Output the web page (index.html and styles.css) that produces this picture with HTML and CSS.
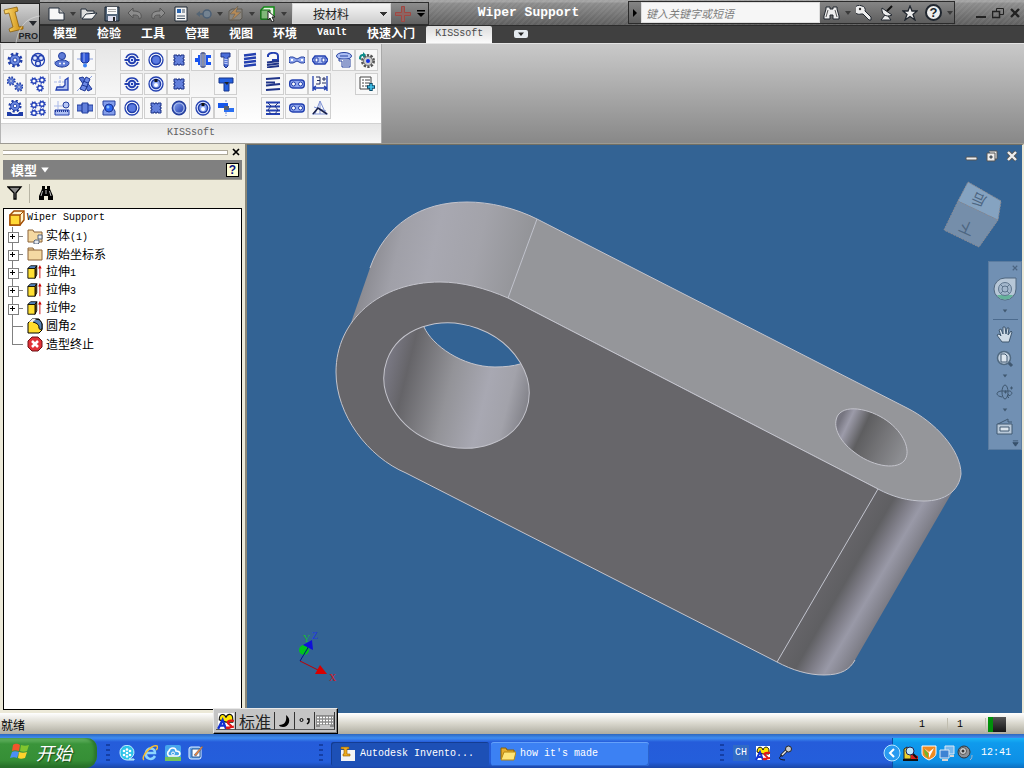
FILE: index.html
```html
<!DOCTYPE html>
<html lang="zh-CN">
<head>
<meta charset="utf-8">
<title>Wiper Support</title>
<link rel="stylesheet" href="styles.css">
</head>
<body>
<svg class="defs" aria-hidden="true">
  <defs>
    <linearGradient id="blue" x1="0" y1="0" x2="1" y2="1"><stop offset="0" stop-color="#7f9bea"/><stop offset="1" stop-color="#2340b0"/></linearGradient>
    <linearGradient id="gold" x1="0" y1="0" x2="1" y2="0"><stop offset="0" stop-color="#ffe07a"/><stop offset="1" stop-color="#c98606"/></linearGradient>
  </defs>
  <symbol id="cog" viewBox="0 0 16 16"><circle cx="8" cy="8" r="6" fill="none" stroke="#1f3da8" stroke-width="3" stroke-dasharray="2.4 2.31"/><circle cx="8" cy="8" r="5" fill="#6d8be0" stroke="#1f3da8"/><circle cx="8" cy="8" r="2" fill="#fff" stroke="#1f3da8"/></symbol>
  <symbol id="cogline" viewBox="0 0 16 16"><circle cx="8" cy="8" r="6" fill="none" stroke="#2340b8" stroke-width="3.4" stroke-dasharray="2.4 2.31"/><circle cx="8" cy="8" r="4.5" fill="#fff" stroke="#2340b8" stroke-width="2.6"/></symbol>
  <symbol id="bearing" viewBox="0 0 16 16"><path d="M2 6a6.500 6.500 0 0 1 12 0M2 10a6.500 6.500 0 0 0 12 0" fill="none" stroke="#2340b0" stroke-width="1.6"/><circle cx="8" cy="8" r="3.3" fill="#dbe4ff" stroke="#2340b0" stroke-width="2"/><path d="M0.500 8h4M11.500 8h4M7 8h2" stroke="#2340b0" stroke-width="2"/></symbol>
  <symbol id="ring" viewBox="0 0 16 16"><circle cx="8" cy="8" r="7" fill="#fff" stroke="#2340b0" stroke-width="1.3"/><circle cx="8" cy="8" r="4.5" fill="#5a7ae0" stroke="#1f3da8" stroke-width="1.5"/></symbol>
  <symbol id="keyring" viewBox="0 0 16 16"><circle cx="8" cy="8" r="7" fill="#dfe6ff" stroke="#2340b0" stroke-width="1.3"/><circle cx="8" cy="8" r="4.5" fill="#8ba5f2" stroke="#1f3da8" stroke-width="1.5"/><circle cx="8" cy="9" r="2" fill="#fff"/><path d="M6.500 3h3v3h-3z" fill="#111"/></symbol>
  <symbol id="sphere" viewBox="0 0 16 16"><circle cx="8" cy="8" r="6.600" fill="#a9bced" stroke="#25409e" stroke-width="1.6"/><circle cx="8" cy="8" r="4.500" fill="url(#blue)"/></symbol>
  <symbol id="spline" viewBox="0 0 16 16"><path d="M3 3h3v1h1V3h2v1h1V3h3v3h-1v1h1v2h-1v1h1v3h-3v-1H9v1H7v-1H6v1H3v-3h1V9H3V7h1V6H3z" fill="#6380db" stroke="#1f3488"/></symbol>
  <symbol id="chain" viewBox="0 0 16 16"><path d="M3 4h10l3 4-3 4H3L0 8z" fill="#a9bcf5" stroke="#2340b0" stroke-width="1.4"/><path d="M3 6h3v4H3zM10 6h3v4h-3z" fill="#fff" stroke="#2340b0"/></symbol>
  <symbol id="links" viewBox="0 0 16 16"><rect x="0.700" y="4" width="14.600" height="8" rx="3" fill="#8fa6ee" stroke="#2340b0" stroke-width="1.4"/><circle cx="4.500" cy="8" r="2" fill="#fff" stroke="#1f3da8"/><circle cx="11.500" cy="8" r="2" fill="#fff" stroke="#1f3da8"/></symbol>
  <symbol id="coil" viewBox="0 0 16 16"><path d="M2 3.500 14 2M2 7l12-1.500M2 10.500 14 9M2 14l12-1.500" stroke="#2340b0" stroke-width="2.400"/></symbol>
  <symbol id="down" viewBox="0 0 8 8"><path d="M1 2h6L4 6z" fill="currentColor"/></symbol>
  <symbol id="extrude" viewBox="0 0 18 16"><path d="M1 4l3-3h7L9 4z" fill="#5d93d3" stroke="#000"/><path d="M9 4l2-3v10l-2 4z" fill="#a77b00" stroke="#000"/><path d="M1 4h8v11H1z" fill="#ffe033" stroke="#000"/><path d="M14.500 15V3" stroke="#c00"/><path d="M12.500 4 14.500 0l2 4z" fill="#c00"/></symbol>
  <symbol id="binoc" viewBox="0 0 18 16"><path d="M5 1h3v3h2V1h3v3l3 7v4h-5v-4H7v4H2v-4l3-7z" fill="currentColor"/><path d="M5.500 6 4 11M12.500 6l1.500 5M9 5v4" stroke="#bbb"/></symbol>
  <symbol id="ime" viewBox="0 0 16 16"><path d="M1 1h14v14H1z" fill="#fff"/><path d="M2 7c0-6 5-6 6-2 1-4 6-4 6 1v3H8z" fill="#ffe600" stroke="#111"/><path d="M1 15 5 7l3 8M3 12h4" fill="none" stroke="#1230d0" stroke-width="2"/><path d="M15 8c-5-1-7 1-4 3s1 4-3 3l7-1" fill="none" stroke="#e01818" stroke-width="2"/></symbol>
</svg>

<header class="top">
  <button class="app" aria-label="Inventor Pro">
    <svg viewBox="0 0 39 39" width="39" height="39"><path d="M3 6l13-3 1 4-3 1 4 15 4-1 0 3-13 3-1-3 4-2L8 9 4 10z" fill="url(#gold)" stroke="#825500" stroke-width="0.700"/><path d="M28 17h8l-4 5z" fill="#24272c"/><path d="M15 39C18 21 26 14 39 12" fill="none" stroke="#eee" opacity="0.500"/></svg>
    <span>PRO</span>
  </button>
  <div class="top-rows">
    <div class="titlebar">
      <div class="qat">
        <button class="q" aria-label="新建"><svg viewBox="0 0 18 16" width="18" height="16"><path d="M1 2h10l5 5v7H1z" fill="#f7f7f7" stroke="#222d3a"/><path d="M11 2v5h5" fill="#bbb" stroke="#222d3a"/></svg></button>
        <button class="dd" aria-label="新建选项"><svg width="8" height="8"><use href="#down"/></svg></button>
        <button class="q" aria-label="打开"><svg viewBox="0 0 18 16" width="18" height="16"><path d="M1 12V3h5l1 2h7v3" fill="#ddd" stroke="#222d3a"/><path d="M2 13 6 8l11-1-5 6z" fill="#f3f3f3" stroke="#222d3a"/></svg></button>
        <button class="q" aria-label="保存"><svg viewBox="0 0 16 16" width="16" height="16"><path d="M1 1h14v14H1z" fill="#57697d" stroke="#16202c"/><path d="M3 1h10v7H3z" fill="#fafafa"/><path d="M4 10h8v5H4z" fill="#dde"/><path d="M9 11h2v4H9z" fill="#222"/><path d="M4 3.500h8M4 5.500h8" stroke="#aaa"/></svg></button>
        <button class="q" aria-label="撤消"><svg viewBox="0 0 16 14" width="16" height="14"><path d="M1 6l5-5v3c6 0 9 2 8 7l-2 1c0-4-2-4-6-4v3z" fill="#8c8c8c" stroke="#555"/></svg></button>
        <button class="q" aria-label="重做"><svg viewBox="0 0 16 14" width="16" height="14"><path d="M15 6l-5-5v3C4 4 1 6 2 11l2 1c0-4 2-4 6-4v3z" fill="#8c8c8c" stroke="#555"/></svg></button>
        <button class="q" aria-label="特性"><svg viewBox="0 0 14 16" width="14" height="16"><path d="M1 1h12v14H1z" fill="#f3f3f3" stroke="#1d2733"/><path d="M3 3h4v4H3z" fill="#2a65b0"/><path d="M8 4h3M8 6h3M3 10h8M3 12.500h8" stroke="#456"/></svg></button>
        <button class="q" aria-label="返回"><svg viewBox="0 0 18 14" width="18" height="14"><path d="M1 7l4-3v2h4v2H5v2z" fill="#556574"/><circle cx="12" cy="7" r="4" fill="#748391" stroke="#4c5f74" stroke-width="1.500"/></svg></button>
        <button class="dd" aria-label="返回选项"><svg width="8" height="8"><use href="#down"/></svg></button>
        <button class="q" aria-label="更新"><svg viewBox="0 0 18 16" width="18" height="16"><path d="M2 5l3-2h10v9l-2 2H2z" fill="#8a8680" stroke="#5d5851"/><path d="M11 0 3 8l5 0-4 7 10-9-5 0z" fill="#b58a58" stroke="#5d5851" stroke-width="0.500"/></svg></button>
        <button class="dd" aria-label="更新选项"><svg width="8" height="8"><use href="#down"/></svg></button>
        <button class="q" aria-label="选择"><svg viewBox="0 0 16 16" width="16" height="16"><path d="M1 4l3-3h10v9l-3 3H1z" fill="#e6f5e0" stroke="#118a15" stroke-width="1.500"/><path d="M1 4h9v9H1z" fill="#7fb878" stroke="#0b650e"/><path d="M8 5v9l2-2 2 4 2-1-2-4h3z" fill="#fff" stroke="#222"/></svg></button>
        <button class="dd" aria-label="选择选项"><svg width="8" height="8"><use href="#down"/></svg></button>
        <select class="material" aria-label="颜色"><option>按材料</option></select>
        <button class="q" aria-label="添加"><svg viewBox="0 0 16 16" width="16" height="16"><path d="M6.500 0.500h3v6h6v3h-6v6h-3v-6h-6v-3h6z" fill="#8d6562" stroke="#a14742"/></svg></button>
        <button class="dd dark" aria-label="自定义"><svg viewBox="0 0 10 10" width="10" height="10"><path d="M1 1h8v1.500H1zM1 4h8L5 8z" fill="currentColor"/></svg></button>
      </div>
      <h1 class="title">Wiper Support</h1>
      <form class="search">
        <button type="button" class="go" aria-label="展开"><svg viewBox="0 0 6 8" width="6" height="8"><path d="M1 0l4 4-4 4z"/></svg></button>
        <input type="text" aria-label="搜索" placeholder="键入关键字或短语">
        <button type="button" class="s" aria-label="搜索"><svg viewBox="0 0 18 16" width="18" height="16"><path d="M3 2h4v2h3V2h4v2l2 7v3h-6v-4H7v4H1v-3l2-7z" fill="#eee" stroke="#20262e"/><path d="M5 5 3 12M12 5l2 7" stroke="#555"/></svg></button>
        <button type="button" class="dd" aria-label="搜索选项"><svg width="8" height="8"><use href="#down"/></svg></button>
        <button type="button" class="s" aria-label="速博"><svg viewBox="0 0 16 16" width="16" height="16"><path d="M6 1a5 4.500 0 1 0-1 8l2 0 6 6h2v-3L9 6c1-2-1-5-3-5z" fill="#eee" stroke="#20262e"/><circle cx="4" cy="4" r="1.200" fill="#333"/></svg></button>
        <button type="button" class="s" aria-label="通讯中心"><svg viewBox="0 0 16 16" width="16" height="16"><path d="M6 10l-4 5h10L9 11" fill="#eee" stroke="#20262e"/><path d="M3 3c-1 6 4 10 10 7z" fill="#eee" stroke="#20262e"/><path d="M8 6l5-5" stroke="#111" stroke-width="2"/></svg></button>
        <button type="button" class="s" aria-label="收藏夹"><svg viewBox="0 0 16 16" width="16" height="16"><path d="M8 1l2 5h5l-4 3.500 2 5.500-5-3.500L3 15l2-5.500L1 6h5z" fill="#eee" stroke="#20262e" stroke-width="1.300"/></svg></button>
        <button type="button" class="s help" aria-label="帮助">?</button>
        <button type="button" class="dd" aria-label="帮助选项"><svg width="8" height="8"><use href="#down"/></svg></button>
      </form>
      <div class="wincontrols">
        <button aria-label="最小化"><svg viewBox="0 0 12 12" width="12" height="12"><path d="M1 9h10v2H1z" fill="#222"/></svg></button>
        <button aria-label="还原"><svg viewBox="0 0 12 12" width="12" height="12" fill="none" stroke="#222"><path d="M4.500 4V1.500h7v6H8"/><path d="M0.500 4.500h7v6h-7z" stroke-width="1.500"/></svg></button>
        <button aria-label="关闭"><svg viewBox="0 0 12 12" width="12" height="12"><path d="M2 2l8 8M10 2l-8 8" stroke="#222" stroke-width="2.400"/></svg></button>
      </div>
    </div>
    <nav class="tabs">
      <button>模型</button><button>检验</button><button>工具</button><button>管理</button><button>视图</button><button>环境</button><button class="lat">Vault</button><button>快速入门</button><button class="lat active">KISSsoft</button>
      <button class="collapse" aria-label="最小化功能区"><svg viewBox="0 0 14 8" width="14" height="8"><rect width="14" height="8" rx="2" fill="#e5eaef"/><path d="M4 2.500h6L7 6z" fill="#222"/></svg></button>
    </nav>
  </div>
</header>

<section class="ribbon">
  <div class="panel">
    <div class="tools">
      <button class="r1 c1" aria-label="齿轮"><svg><use href="#cog"/></svg></button>
      <button class="r1 c2" aria-label="行星齿轮"><svg viewBox="0 0 16 16"><circle cx="8" cy="8" r="6.500" fill="#fff" stroke="#2340b0" stroke-width="1.300"/><circle cx="5" cy="6" r="2.500" fill="#dfe7ff" stroke="#2340b0" stroke-width="1.300"/><circle cx="11" cy="6" r="2.500" fill="#dfe7ff" stroke="#2340b0" stroke-width="1.300"/><circle cx="8" cy="11.500" r="2.500" fill="#dfe7ff" stroke="#2340b0" stroke-width="1.300"/></svg></button>
      <button class="r1 c3" aria-label="蜗轮"><svg viewBox="0 0 16 16"><path d="M8 0v16M0 10h16" stroke="#8da2e0"/><circle cx="8" cy="4" r="3.500" fill="#5e7bd6" stroke="#25409e"/><ellipse cx="8" cy="11.500" rx="7" ry="3.500" fill="#5e7bd6" stroke="#25409e"/><circle cx="6" cy="11.500" r="1" fill="#fff"/><circle cx="10" cy="11.500" r="1" fill="#fff"/></svg></button>
      <button class="r1 c4" aria-label="锥齿轮"><svg viewBox="0 0 16 16"><path d="M0 7h16" stroke="#8da2e0"/><path d="M4 1h8v8l-2 2H6L4 9z" fill="#3157d6" stroke="#1d3694"/><path d="M7 1v9" stroke="#9ab0f5"/><circle cx="8" cy="13.500" r="2" fill="#3b83f5"/></svg></button>
      <button class="r1 c6" aria-label="轴承"><svg><use href="#bearing"/></svg></button>
      <button class="r1 c7" aria-label="滑动轴承"><svg><use href="#ring"/></svg></button>
      <button class="r1 c8" aria-label="花键"><svg><use href="#spline"/></svg></button>
      <button class="r1 c9" aria-label="轴"><svg viewBox="0 0 16 16"><path d="M0 6h3V3h2v10H3v-3H0z" fill="#1753ef"/><path d="M11 3h5v3h-3v4h3v3h-5z" fill="#1753ef"/><path d="M6 1h4v14H6z" fill="#cddafa" stroke="#253d88"/><path d="M8 0v16" stroke="#445"/></svg></button>
      <button class="r1 c10" aria-label="螺栓"><svg viewBox="0 0 16 16"><path d="M3 1h9v4h-2v9l-2 2-2-2V5H3z" fill="#4b6ed9" stroke="#1f3488"/><path d="M6 7l4 1M6 9l4 1M6 11l4 1" stroke="#cdd8ff"/></svg></button>
      <button class="r1 c11" aria-label="压簧"><svg><use href="#coil"/></svg></button>
      <button class="r1 c12" aria-label="拉簧"><svg viewBox="0 0 16 16"><path d="M3 5V3c2-3 10-3 10 1v4H7" fill="none" stroke="#2340b0" stroke-width="2"/><path d="M2 10.500 14 9M2 13 14 11.500M2 15.500 14 14" stroke="#1f3488" stroke-width="1.800"/></svg></button>
      <button class="r1 c13" aria-label="链条"><svg viewBox="0 0 16 16"><path d="M0 6l1-1h3l4 2 4-2h3l1 1v4l-1 1h-3L8 9l-4 2H1l-1-1z" fill="#8fa6ee" stroke="#25409e"/><path d="M2 8h2M12 8h2" stroke="#fff" stroke-width="2"/></svg></button>
      <button class="r1 c14" aria-label="链轮"><svg><use href="#chain"/></svg></button>
      <button class="r1 c15" aria-label="带轮"><svg viewBox="0 0 16 16"><ellipse cx="8" cy="4" rx="7.500" ry="3.500" fill="#aec0f5" stroke="#25409e"/><path d="M3 7h11v8H6V9H3z" fill="#fff" stroke="#25409e"/><path d="M8 8v6M10 8v6M12 8v6M4 4h8" stroke="#25409e"/></svg></button>
      <button class="r1 c16" aria-label="更新齿轮"><svg viewBox="0 0 16 16"><circle cx="9" cy="9" r="5.500" fill="none" stroke="#555" stroke-width="3" stroke-dasharray="2.200 1.250"/><circle cx="9" cy="9" r="4.500" fill="#ccc" stroke="#777"/><circle cx="9" cy="9" r="2" fill="#1232e6"/><path d="M0 7c0-4 2-5 4-5V0l3 3-3 3V4C2 4 2 6 2 8z" fill="#0d8a87"/></svg></button>

      <button class="r2 c1" aria-label="齿轮副"><svg viewBox="0 0 16 16"><use href="#cog" x="-1" y="0" width="10" height="10"/><use href="#cog" x="7" y="6" width="10" height="10"/></svg></button>
      <button class="r2 c2" aria-label="三齿轮"><svg viewBox="0 0 16 16"><use href="#cogline" x="0" y="1" width="8" height="8"/><use href="#cogline" x="8" y="0" width="8" height="8"/><use href="#cogline" x="6" y="8" width="8" height="8"/></svg></button>
      <button class="r2 c3" aria-label="锥齿轮副"><svg viewBox="0 0 16 16"><path d="M6 0v12M0 6h12" stroke="#a9b8e8" stroke-dasharray="3 1"/><path d="M14 2v12H2l1-3h6l2-2V4z" fill="#aebff2" stroke="#2340b0" stroke-width="1.300"/></svg></button>
      <button class="r2 c4" aria-label="交错轴齿轮"><svg viewBox="0 0 16 16"><path d="M0 15 15 0" stroke="#8da2e0"/><path d="M2 2l4-1 9 12-4 2z" fill="#5876d8" stroke="#1d3694"/><path d="M9 1l4 2-5 12-5-2z" fill="#6e8be5" stroke="#1d3694"/><path d="M6 5l5 2M5 9l6 2" stroke="#1d3694"/></svg></button>
      <button class="r2 c6" aria-label="滚动轴承"><svg><use href="#bearing"/></svg></button>
      <button class="r2 c7" aria-label="键"><svg><use href="#keyring"/></svg></button>
      <button class="r2 c8" aria-label="花键轴"><svg><use href="#spline"/></svg></button>
      <button class="r2 c10" aria-label="销"><svg viewBox="0 0 16 16"><path d="M1 2h14v5h-4v8H6V7H1z" fill="#2460df" stroke="#17358a"/><path d="M6 6h5l-2 3z" fill="#222"/></svg></button>
      <button class="r2 c12" aria-label="碟簧"><svg viewBox="0 0 16 16"><path d="M1 3l14-1M1 6.500h9M1 9.500 15 8M1 14l14-1" stroke="#1f3488" stroke-width="2.200"/></svg></button>
      <button class="r2 c13" aria-label="套筒链"><svg><use href="#links"/></svg></button>
      <button class="r2 c14" aria-label="尺寸链"><svg viewBox="0 0 16 16"><path d="M1 0v15M15 0v15M1 12h14M4 10l-3 2 3 2M12 10l3 2-3 2" fill="none" stroke="#2340b0" stroke-width="1.300"/><path d="M4 1h4v7H4M5 4.500h3M10 3h4M12 1v4M10 7h4" fill="none" stroke="#222d60"/></svg></button>
      <button class="r2 c16" aria-label="添加列表"><svg viewBox="0 0 16 16"><path d="M1 1h11v12H1z" fill="#fff" stroke="#444"/><path d="M3 4h2M6 4h5M3 7h2M6 7h5M3 10h2M6 10h3" stroke="#444"/><path d="M12 7v8M8 11h8" stroke="#084a68" stroke-width="3.400"/><path d="M12 8v6M9 11h6" stroke="#42c4ee" stroke-width="1.600"/></svg></button>

      <button class="r3 c1" aria-label="齿条"><svg viewBox="0 0 16 16"><use href="#cog" x="1" y="-1" width="14" height="14"/><path d="M0 15h16M0 13h3l2 2M16 13h-3l-2 2" fill="none" stroke="#1f3da8" stroke-width="2"/></svg></button>
      <button class="r3 c2" aria-label="四齿轮"><svg viewBox="0 0 16 16"><use href="#cogline" x="0" y="1" width="8" height="8"/><use href="#cogline" x="8" y="0" width="8" height="8"/><use href="#cogline" x="0" y="9" width="8" height="8"/><use href="#cogline" x="8" y="8" width="8" height="8"/></svg></button>
      <button class="r3 c3" aria-label="齿条副"><svg viewBox="0 0 16 16"><path d="M0 6h9M4 1v8" stroke="#a9b8e8"/><circle cx="12" cy="5" r="3" fill="#b9c8f5" stroke="#25409e"/><path d="M1 10h14v5H1z" fill="#aebff2" stroke="#2340b0"/><path d="M1 11h14" stroke="#1d3694" stroke-width="2" stroke-dasharray="1 1"/></svg></button>
      <button class="r3 c4" aria-label="轴计算"><svg viewBox="0 0 16 16"><path d="M0 5h5V3h6v2h5v6h-5v2H5v-2H0z" fill="#6380db" stroke="#25409e"/><path d="M5 4v8M11 4v8" stroke="#1d3694"/></svg></button>
      <button class="r3 c5" aria-label="轴承座"><svg viewBox="0 0 16 16"><path d="M2 1h12v4l-2 3 2 3v4H2v-4l2-3-2-3z" fill="#839dea" stroke="#25409e"/><circle cx="8" cy="8" r="4" fill="#2b66f0" stroke="#1d3694"/><circle cx="7" cy="7" r="1.500" fill="#8cc1ff"/></svg></button>
      <button class="r3 c6" aria-label="过盈配合"><svg><use href="#ring"/></svg></button>
      <button class="r3 c7" aria-label="矩形花键"><svg><use href="#spline"/></svg></button>
      <button class="r3 c8" aria-label="圆柱"><svg><use href="#sphere"/></svg></button>
      <button class="r3 c9" aria-label="平键"><svg><use href="#keyring"/></svg></button>
      <button class="r3 c10" aria-label="铆钉"><svg viewBox="0 0 16 16"><path d="M8 0v16" stroke="#7288d5" stroke-dasharray="2 1"/><path d="M0 3h10v5H0z" fill="#1656ea"/><path d="M6 8h10v4H6z" fill="#2a6ff2"/><path d="M6 6h5v4H6z" fill="#555d70"/></svg></button>
      <button class="r3 c12" aria-label="扭簧"><svg viewBox="0 0 16 16"><path d="M1 2.500h14M1 6.500h14M1 10.500h14M1 14h14" stroke="#2340b0" stroke-width="1.800"/><path d="M3 3l3 3-3 4 3 4M13 3l-3 3 3 4-3 4" fill="none" stroke="#1f3488"/></svg></button>
      <button class="r3 c13" aria-label="滚子链"><svg><use href="#links"/></svg></button>
      <button class="r3 c14" aria-label="接触分析"><svg viewBox="0 0 16 16"><path d="M3 14 8 1l6 13M0 14h16M2 7l12 4M8 1v13" fill="none" stroke="#8094d6"/><path d="M1 14l5-6 9 6" fill="none" stroke="#18204a" stroke-width="1.600"/></svg></button>
    </div>
    <div class="panel-label">KISSsoft</div>
  </div>
</section>

<main class="work">
  <aside class="browser">
    <div class="grip"><i></i><button aria-label="关闭浏览器"><svg viewBox="0 0 8 8" width="8" height="8"><path d="M1 1l6 6M7 1 1 7" stroke="#000" stroke-width="1.700"/></svg></button></div>
    <div class="browser-title"><button class="browser-menu">模型<svg width="10" height="10"><use href="#down"/></svg></button><button class="qhelp" aria-label="帮助">?</button></div>
    <div class="browser-tools">
      <button aria-label="过滤器"><svg viewBox="0 0 16 14" width="16" height="14"><path d="M1 1h13L9 7v6H7V7z" fill="#888" stroke="#000" stroke-width="1.300"/></svg></button>
      <button aria-label="查找"><svg width="18" height="16"><use href="#binoc"/></svg></button>
    </div>
    <ul class="tree">
      <li class="root"><svg viewBox="0 0 16 16" width="16" height="16"><path d="M1 5l4-4h10v9l-4 5H1z" fill="#fff6cf" stroke="#a34d00" stroke-width="1.400"/><path d="M1 5h10v10H1z" fill="#ffd936" stroke="#a34d00" stroke-width="1.400"/><path d="M11 5l4-4" stroke="#a34d00"/></svg><span class="lat">Wiper Support</span></li>
      <li><button class="twig" aria-label="展开"></button><svg viewBox="0 0 16 16" width="16" height="16"><path d="M1 14V2h5l1 2h8v10z" fill="#f5d9a2" stroke="#8b6338"/><path d="M8 12h4v3l-1 1H7v-3zM11 7h4v4h-4z" fill="#e8ebf0" stroke="#54647e"/></svg><span>实体<span class="lat">(1)</span></span></li>
      <li><button class="twig" aria-label="展开"></button><svg viewBox="0 0 16 16" width="16" height="16"><path d="M1 14V2h5l1 2h8v10z" fill="#f5d9a2" stroke="#8b6338"/><path d="M1 4h6" stroke="#8b6338"/></svg><span>原始坐标系</span></li>
      <li><button class="twig" aria-label="展开"></button><svg width="16" height="16"><use href="#extrude"/></svg><span>拉伸<span class="lat">1</span></span></li>
      <li><button class="twig" aria-label="展开"></button><svg width="16" height="16"><use href="#extrude"/></svg><span>拉伸<span class="lat">3</span></span></li>
      <li><button class="twig" aria-label="展开"></button><svg width="16" height="16"><use href="#extrude"/></svg><span>拉伸<span class="lat">2</span></span></li>
      <li><i class="twig leaf"></i><svg viewBox="0 0 16 16" width="16" height="16"><path d="M1 5l4-4h7l3 5v6l-3 3H1z" fill="#ffdd2e" stroke="#000"/><path d="M6 4c0-4 8-4 9 2v5c-2 1-3 0-3-1 0-4-3-5-6-6z" fill="#5985b9" stroke="#000"/><path d="M2 4l3-3h4L6 4z" fill="#eee"/></svg><span>圆角<span class="lat">2</span></span></li>
      <li><i class="twig leaf last"></i><svg viewBox="0 0 16 16" width="16" height="16"><path d="M5 1h6l4 4v6l-4 4H5l-4-4V5z" fill="#e03137" stroke="#6d1216"/><path d="M5 5l6 6M11 5l-6 6" stroke="#fff" stroke-width="2.500"/></svg><span>造型终止</span></li>
    </ul>
  </aside>

  <section class="viewport">
    <svg class="scene" viewBox="247 145 775 568" preserveAspectRatio="xMidYMid slice" role="img" aria-label="Wiper Support 三维模型">
      <defs>
        <linearGradient id="cyl" gradientUnits="userSpaceOnUse" x1="350" y1="265" x2="518" y2="305"><stop offset="0" stop-color="#7e7e84"/><stop offset="0.250" stop-color="#a0a0a8"/><stop offset="0.450" stop-color="#a8a8b1"/><stop offset="0.700" stop-color="#a3a3aa"/><stop offset="1" stop-color="#929397"/></linearGradient>
        <linearGradient id="bore" gradientUnits="userSpaceOnUse" x1="384" y1="372" x2="528" y2="408"><stop offset="0" stop-color="#7a7984"/><stop offset="0.150" stop-color="#656468"/><stop offset="0.450" stop-color="#939398"/><stop offset="0.700" stop-color="#a8a8b2"/><stop offset="0.860" stop-color="#a2a2aa"/><stop offset="1" stop-color="#818188"/></linearGradient>
        <linearGradient id="pin" gradientUnits="userSpaceOnUse" x1="838" y1="425" x2="902" y2="455"><stop offset="0" stop-color="#777681"/><stop offset="0.120" stop-color="#9c9ba9"/><stop offset="0.350" stop-color="#5e5e60"/><stop offset="0.650" stop-color="#747477"/><stop offset="1" stop-color="#8c8d91"/></linearGradient>
        <linearGradient id="nose" gradientUnits="userSpaceOnUse" x1="828" y1="575" x2="885" y2="608"><stop offset="0" stop-color="#656468"/><stop offset="0.280" stop-color="#5f5f62"/><stop offset="0.500" stop-color="#7e7d87"/><stop offset="0.700" stop-color="#9999a7"/><stop offset="1" stop-color="#7b7b84"/></linearGradient>
        <clipPath id="boreclip"><ellipse cx="456.500" cy="385.500" rx="74" ry="61" transform="rotate(20 456.500 385.500)"/></clipPath>
      </defs>
      <path d="M537 219C515 208 490 202 467 202C420 202 385 225 370 268L345 340L440 400L508 298Z" fill="url(#cyl)"/>
      <path d="M370 268C385 225 420 202 467 202C490 202 515 208 537 219" class="edge"/>
      <path d="M878 489C893 497 908 501 924 501C940 501 950 496 954 489L855 660C850 669 842 675 824 675C808 675 792 670 777 662Z" fill="url(#nose)"/>
      <path d="M777 662C792 670 808 675 824 675C842 675 850 669 855 660" class="edge"/>
      <path d="M537 219L907 408C935 422 961 450 961 474C959 491 945 501 924 501C908 501 893 497 878 489L508 298Z" fill="#95969a" class="edge"/>
      <path d="M508 298C485 288 462 282 440 282C380 282 336 320 336 372C336 415 368 457 406 473L777 662L878 489Z" fill="#67666a" class="edge"/>
      <g clip-path="url(#boreclip)"><path d="M380 320h155v132H380z" fill="url(#bore)"/><path d="M424 327C432 345 462 367 495 367Q510 367 520 364L540 350V310H420Z" fill="#336394" class="edge"/></g>
      <ellipse cx="456.500" cy="385.500" rx="74" ry="61" transform="rotate(20 456.500 385.500)" class="edge"/>
      <path d="M838 415C847 403 874 410 890 423C906 436 911 453 904 461C895 471 870 465 854 452C838 440 832 425 838 415Z" fill="url(#pin)" class="edge"/>
      <path d="M968 182l33 19-3 19-40-19z" fill="#85a3c1"/><path d="M958 201l40 19-19 27-35-17z" fill="#758eaa"/>
      <path d="M968 182l33 19-3 19-19 27-35-17 14-29zM958 201l40 19" class="cube-edge"/>
      <text x="981" y="195" class="cube" font-size="14" transform="rotate(204 981 195)">后</text>
      <text x="969" y="223" class="cube" font-size="15" transform="rotate(204 969 223)">下</text>
      <path d="M300 661l20 10" stroke="#c00000"/><path d="M320 665l7 9-12 0z" fill="#d80000"/>
      <circle cx="304" cy="650" r="5" fill="#00c21c"/><path d="M300 661l9-15" stroke="#00108c"/><path d="M312 640l1 10-10-5z" fill="#1010d8"/>
      <text x="329" y="681" class="axis" fill="#d01822">X</text><text x="303" y="642" class="axis" fill="#18b83a">Y</text><text x="312" y="639" class="axis" fill="#2238dc">Z</text>
    </svg>
    <div class="viewcontrols">
      <button aria-label="最小化"><svg viewBox="0 0 14 12" width="14" height="12"><rect x="1" y="7" width="11" height="3" rx="1" fill="#eee" stroke="#555"/></svg></button>
      <button aria-label="还原"><svg viewBox="0 0 14 12" width="14" height="12" fill="#eee" stroke="#555"><path d="M4 1h8v8h-3"/><path d="M2 3h8v8H2z"/><path d="M5 6h2v2H5z" fill="#336394"/></svg></button>
      <button aria-label="关闭"><svg viewBox="0 0 14 12" width="14" height="12"><path d="M3 2l8 8M11 2l-8 8" stroke="#555" stroke-width="4"/><path d="M3 2l8 8M11 2l-8 8" stroke="#eee" stroke-width="2.400"/></svg></button>
    </div>
    <div class="navbar">
      <button class="n-x" aria-label="关闭"><svg viewBox="0 0 8 8" width="6" height="6"><path d="M1 1l6 6M7 1 1 7" stroke="#4c6480" stroke-width="1.500"/></svg></button>
      <button class="n-wheel" aria-label="控制盘"><svg viewBox="0 0 24 24" width="24" height="24"><path d="M12 1h11v11A11 11 0 1 1 12 1z" fill="#b7c7d7" stroke="#50677f"/><path d="M4 18h16c-3 6-13 6-16 0z" fill="#65b29a"/><circle cx="12" cy="12" r="6.500" fill="#a3b7cc" stroke="#60778f"/><circle cx="12" cy="12" r="3" fill="none" stroke="#60778f"/><path d="M7 7l3 3M17 7l-3 3M7 17l3-3M17 17l-3-3" stroke="#60778f"/></svg></button>
      <svg class="n-dd" width="6" height="6"><use href="#down"/></svg>
      <hr>
      <button class="n-b" aria-label="平移"><svg viewBox="0 0 18 18" width="18" height="18"><path d="M6 16C4 13 2 11 1 9l2-1 2 2L3 4l2-1 2 5V1h2l1 7 1-6h2l-1 7 3-4 1 1-3 10z" fill="#cfdbe6" stroke="#405870"/></svg></button>
      <button class="n-b" aria-label="缩放"><svg viewBox="0 0 18 18" width="18" height="18"><path d="M11 11l5 5" stroke="#405870" stroke-width="3"/><circle cx="8" cy="8" r="6.500" fill="#c3d1df" stroke="#506980" stroke-width="1.500"/><path d="M5 4h4l2 2v6H5z" fill="#dde6ee" stroke="#405870"/></svg></button>
      <svg class="n-dd" width="6" height="6"><use href="#down"/></svg>
      <button class="n-b" aria-label="动态观察"><svg viewBox="0 0 18 18" width="18" height="18" fill="none" stroke="#405870"><ellipse cx="9" cy="8" rx="3" ry="7"/><path d="M6 13C0 12-1 8 5 7h9c4 2 1 5-3 5l2-2M11 12l2 2M8 8h3M9.500 6.500v3M14 4h3M15.500 2.500v3"/></svg></button>
      <svg class="n-dd" width="6" height="6"><use href="#down"/></svg>
      <button class="n-b" aria-label="观察方向"><svg viewBox="0 0 18 18" width="18" height="18"><path d="M2 6 12 1v3h4" fill="none" stroke="#405870"/><path d="M1 6h15v10H1z" fill="#b8c8d8" stroke="#405870"/><path d="M4 9h9v4H4z" fill="#dce5ed" stroke="#405870"/></svg></button>
      <button class="n-x" aria-label="自定义"><svg viewBox="0 0 8 8" width="7" height="7"><path d="M1 1h6M1 3h6L4 7z" fill="#38516c" stroke="#38516c"/></svg></button>
    </div>
  </section>
</main>

<footer class="status">
  <span class="ready">就绪</span>
  <span class="cell lat">1</span><span class="cell lat">1</span><span class="meter"></span>
  <div class="imebar">
    <button aria-label="输入法"><svg width="18" height="18"><use href="#ime"/></svg></button><button class="std">标准</button><button aria-label="半角"><svg viewBox="0 0 14 14" width="14" height="14"><path d="M8 1c6 4 3 12-3 12-2 0-4-1-4-2 6 0 8-4 7-10z"/></svg></button><button aria-label="标点"><svg viewBox="0 0 14 14" width="14" height="14"><circle cx="3.500" cy="6" r="1.500" fill="none" stroke="#000"/><path d="M9 5h2v2c0 2-1 2-2 3" fill="none" stroke="#000" stroke-width="1.500"/></svg></button><button aria-label="软键盘"><svg viewBox="0 0 18 14" width="18" height="14"><path d="M0 1h18v12H0z" fill="#8b8b8b"/><path d="M1 3.500h16M1 6.500h16M1 9.500h16" stroke="#fff" stroke-width="1.600" stroke-dasharray="2 1"/><path d="M4 12h10" stroke="#fff"/></svg></button>
  </div>
</footer>

<nav class="taskbar">
  <button class="start"><svg viewBox="0 0 20 20" width="20" height="20"><path d="M3 3c3-2 5-1 7 0L9 9C6 8 4 8 2 9z" fill="#f4552b"/><path d="M11 3c3 1 5 1 8 0l-2 6c-2 1-5 1-7 0z" fill="#81c52f"/><path d="M2 10c2-1 4-1 7 0l-2 6c-2-1-4-1-7 0z" fill="#4b8ef5"/><path d="M9 10c3 1 5 1 8 0l-2 6c-3 1-5 1-7 0z" fill="#ffd32c"/></svg><span>开始</span></button>
  <i class="dots"></i>
  <div class="quick">
    <button aria-label="影音"><svg viewBox="0 0 16 16" width="16" height="16"><path d="M1 8a7 7 0 1 1 9 6h5v1H8a7 7 0 0 1-7-7z" fill="#2bc4ea" stroke="#c8f2ff"/><g fill="#fff"><circle cx="8" cy="4.500" r="1.300"/><circle cx="11" cy="6" r="1.300"/><circle cx="11" cy="10" r="1.300"/><circle cx="8" cy="11.500" r="1.300"/><circle cx="5" cy="10" r="1.300"/><circle cx="5" cy="6" r="1.300"/><circle cx="8" cy="8" r="1.300"/></g></svg></button>
    <button aria-label="浏览器"><svg viewBox="0 0 16 16" width="16" height="16"><path d="M13 11c-3 5-10 3-9-3s9-6 9 0H5" fill="none" stroke="#8cd5ff" stroke-width="2.500"/><path d="M2 15C-2 12 10-1 15 1c1 1 0 3-1 4" fill="none" stroke="#f4bd32" stroke-width="1.500"/></svg></button>
    <button aria-label="云盘"><svg viewBox="0 0 16 16" width="16" height="16"><rect width="16" height="16" rx="2" fill="#47a5ec"/><path d="M0 12h16v4H0z" fill="#74c25c"/><path d="M4 11a3 3 0 0 1 0-5c1-4 7-4 7 0 5 0 5 5 1 5z" fill="none" stroke="#fff" stroke-width="1.600"/><circle cx="8" cy="8.500" r="1.500" fill="none" stroke="#fff"/></svg></button>
    <button aria-label="显示桌面"><svg viewBox="0 0 16 16" width="16" height="16"><rect x="1" y="2" width="12" height="12" rx="2" fill="#5a9ce6" stroke="#e2f0ff"/><path d="M4 4h8v8H4z" fill="#fff" stroke="#285994"/><path d="M6 10l8-9 1 1-7 9z" fill="#f08335" stroke="#285994" stroke-width="0.500"/></svg></button>
  </div>
  <i class="dots push"></i>
  <div class="tasks">
    <button class="task on"><svg viewBox="0 0 16 16" width="16" height="16"><path d="M1 4h14v11H1z" fill="#f4f4f4"/><path d="M1 1h8v2H7v5h3v2H3V8h1V3H1z" fill="#efaa1c" stroke="#8a5b04" stroke-width="0.600"/></svg><span class="lat">Autodesk Invento...</span></button>
    <button class="task"><svg viewBox="0 0 16 16" width="16" height="16"><path d="M1 13V2h5l1 2h7v2" fill="#e6ad2d" stroke="#8b6000"/><path d="M1 14 4 6h12l-2 8z" fill="#ffe577" stroke="#b58612"/></svg><span class="lat">how it's made</span></button>
  </div>
  <i class="dots gap"></i>
  <div class="lang"><button class="lat ch">CH</button><button aria-label="输入法"><svg width="16" height="16"><use href="#ime"/></svg></button><button aria-label="语音"><svg viewBox="0 0 16 16" width="16" height="16"><path d="M10 5 4 11" stroke="#222" stroke-width="3"/><path d="M9 6 5 10" stroke="#eee" stroke-width="1.500"/><circle cx="11.500" cy="4" r="3" fill="#ccc" stroke="#222"/><path d="M4 11c-4 3 1 4 4 4" fill="none" stroke="#111"/></svg></button></div>
  <div class="tray">
    <button class="expand" aria-label="显示隐藏的图标"><svg viewBox="0 0 18 18" width="18" height="18"><circle cx="9" cy="9" r="8" fill="#289af0" stroke="#b9e6ff"/><path d="M11 5 7 9l4 4" fill="none" stroke="#fff" stroke-width="2"/></svg></button>
    <svg viewBox="0 0 16 16" width="16" height="16"><path d="M1 14V4l3-2 4 3v9z" fill="#ebd12f" stroke="#222"/><path d="M8 14V9l7 2v3z" fill="#d9221d"/><circle cx="7" cy="6" r="4" fill="#bfe9fb" stroke="#225"/><path d="M10 9l4 4M0 15h15" stroke="#111" stroke-width="2"/></svg>
    <svg viewBox="0 0 16 16" width="16" height="16"><path d="M1 1h14v7c0 4-5 6-7 7-2-1-7-3-7-7z" fill="#ef8b22" stroke="#fff"/><path d="M3 3l5 4 5-4-3 6-2 4V8z" fill="#fff"/><path d="M3 4l4 4v5C4 11 3 8 3 4z" fill="#6fb42d"/></svg>
    <svg viewBox="0 0 16 16" width="16" height="16"><path d="M6 1h9v8H6z" fill="#76b9ef" stroke="#dce9f5"/><path d="M1 5h9v8H1z" fill="#3d83d3" stroke="#dce9f5"/><path d="M3 15h6M11 11h4" stroke="#d5d5d5" stroke-width="2"/></svg>
    <svg viewBox="0 0 16 16" width="16" height="16"><circle cx="7" cy="7" r="6" fill="#8b9097" stroke="#30343a"/><circle cx="6" cy="6" r="3.500" fill="#d2d4d6" stroke="#555"/><circle cx="6" cy="6" r="1.500" fill="#333"/><path d="M13 15c2-1 2-4 2-5" fill="none" stroke="#aeb8c5"/></svg>
    <time class="lat">12:41</time>
  </div>
</nav>
</body>
</html>
```
FILE: styles.css
```css
* { box-sizing: border-box; }
html, body { height: 100%; }
body {
  margin: 0;
  display: flex;
  flex-direction: column;
  overflow: hidden;
  background: #ece9d8;
  color: #000;
  font: 12px/18px "Noto Sans CJK SC", sans-serif;
}
button {
  margin: 0;
  padding: 0;
  border: 0;
  background: none;
  color: inherit;
  font: inherit;
  display: flex;
  align-items: center;
  justify-content: center;
  flex: none;
}
svg { display: block; flex: none; }
.defs { position: absolute; width: 0; height: 0; }
.lat { font-family: "Liberation Mono", "Noto Sans CJK SC", monospace; font-size: 10px; }

/* Title bar and tabs */
.top { display: flex; background: #404040; height: 44px; flex: none; border-bottom: 1px solid #e4e4e4; }
.app {
  position: relative;
  width: 40px;
  height: 40px;
  margin-top: 3px;
  border: 1px solid #222;
  background: linear-gradient(#d2d2d2, #858585);
}
.app span { position: absolute; right: 1px; bottom: 0; font: bold 9px/11px "Liberation Sans", sans-serif; color: #202226; }
.top-rows { flex: 1; display: flex; flex-direction: column; min-width: 0; }
.titlebar {
  display: flex;
  align-items: center;
  height: 26px;
  flex: none;
  border-bottom: 1px solid #2c2c2c;
  background: repeating-linear-gradient(135deg, rgba(255,255,255,.05) 0 2px, transparent 2px 4px), linear-gradient(#a2a2a2 0 2px, #8d8d8d 3px, #5e5e5e);
}
.qat {
  display: flex;
  align-items: center;
  height: 23px;
  margin-top: 2px;
  padding: 0 1px 0 5px;
  border: 1px solid #2e2e2e;
  border-left: 0;
  background: linear-gradient(#8d8d8d, #606060);
}
.q { width: 23px; height: 20px; }
.dd { width: 9px; height: 20px; color: #3b3b3b; }
.dd.dark { width: 13px; color: #000; }
.material {
  width: 99px;
  height: 21px;
  margin-left: 4px;
  padding: 0 0 0 20px;
  border: 1px solid #d7d7d7;
  border-radius: 0;
  appearance: none;
  color: #222;
  font: 12px/18px "Noto Sans CJK SC", sans-serif;
  background: linear-gradient(45deg, transparent 50%, #333 50%) 87px 8px / 4px 4px no-repeat, linear-gradient(315deg, transparent 50%, #333 50%) 91px 8px / 4px 4px no-repeat, linear-gradient(#f5f5f5, #cfcfcf);
}
.title { flex: 1; margin: 0; text-align: center; color: #fff; font: bold 13px/18px "Liberation Mono", monospace; white-space: nowrap; }
.search { display: flex; align-items: center; width: 327px; height: 23px; margin: 0; border: 1px solid #2b2b2b; background: linear-gradient(#858585, #5d5d5d); flex: none; }
.go { width: 12px; height: 20px; }
.search input {
  width: 180px;
  height: 21px;
  padding: 0 4px;
  border: 1px solid #ddd;
  background: #f6f6f6;
  font: italic 11px/18px "Noto Sans CJK SC", sans-serif;
}
.search input::placeholder { color: #7d7d7d; opacity: 1; }
.s { width: 23px; height: 20px; }
.help { width: 17px; height: 17px; margin: 0 3px 0 4px; border: 2px solid #20262e; border-radius: 50%; background: #eee; color: #20262e; font: bold 13px/13px "Liberation Sans", sans-serif; }
.wincontrols { display: flex; gap: 5px; width: 69px; padding-left: 20px; flex: none; }
.tabs { display: flex; flex: 1; padding-left: 3px; color: #fff; font-weight: bold; line-height: 14px; }
.tabs button { padding: 0 10px 3px; }
.tabs .lat { font-weight: bold; }
.tabs .active { margin-left: 1px; padding: 0 9px 2px; border-radius: 2px 2px 0 0; background: linear-gradient(#dcdcdc, #fbfbfb); color: #4a4a4a; font-weight: normal; }
.tabs .collapse { width: 58px; padding: 0 0 1px; }

/* Ribbon */
.ribbon { flex: none; background: linear-gradient(#c9c9c9, #888); border-bottom: 1px solid #9c9a92; }
.panel { width: 382px; border-left: 1px solid #b5b5b5; border-right: 1px solid #a9a9a9; background: linear-gradient(#e6e6e6, #fff 80%); }
.tools { display: grid; grid-template-columns: repeat(8, 23px 24px); grid-auto-rows: 22px; row-gap: 2px; padding: 5px 3px 4px 2px; }
.tools button { width: 23px; height: 22px; border: 1px solid #cfcfcf; background: #f8f8f8; }
.tools svg { width: 16px; height: 16px; }
.r1 { grid-row: 1; } .r2 { grid-row: 2; } .r3 { grid-row: 3; }
.c1 { grid-column: 1; } .c2 { grid-column: 2; } .c3 { grid-column: 3; } .c4 { grid-column: 4; }
.c5 { grid-column: 5; } .c6 { grid-column: 6; } .c7 { grid-column: 7; } .c8 { grid-column: 8; }
.c9 { grid-column: 9; } .c10 { grid-column: 10; } .c11 { grid-column: 11; } .c12 { grid-column: 12; }
.c13 { grid-column: 13; } .c14 { grid-column: 14; } .c15 { grid-column: 15; } .c16 { grid-column: 16; }
.panel-label { height: 20px; border-top: 1px solid #d2d2d2; text-align: center; color: #606060; background: linear-gradient(#e6e6e6, #f6f6f6); font: 10px/18px "Liberation Mono", monospace; }

/* Model browser */
.work { flex: 1; display: flex; min-height: 0; }
.browser { display: flex; flex-direction: column; flex: none; width: 247px; padding: 0 3px 3px; border-right: 2px solid #8a8778; background: #ece9d8; }
.grip { display: flex; align-items: center; height: 16px; gap: 2px; }
.grip i { flex: 1; height: 5px; border: solid #aca899; border-width: 1px 1px 1px 0; background: #fff; }
.grip button { width: 12px; }
.browser-title { display: flex; justify-content: space-between; align-items: center; height: 20px; padding: 0 3px 0 8px; background: #808080; color: #fff; border-bottom: 1px solid #9c9a8f; }
.browser-menu { gap: 3px; font-weight: bold; font-size: 13px; }
.qhelp { width: 13px; height: 14px; border: 1px solid #000; background: #ffffd8; color: #0a1480; font: bold 12px/12px "Liberation Sans", sans-serif; }
.browser-tools { display: flex; align-items: center; height: 28px; padding-bottom: 2px; }
.browser-tools button { width: 26px; height: 19px; padding-right: 3px; }
.browser-tools button + button { width: 33px; padding: 0; border-left: 1px solid #b7b4a4; }
.tree { flex: 1; margin: 0; padding: 0; list-style: none; background: #fff; border: 1px solid #000; }
.tree li { display: flex; align-items: center; height: 18px; gap: 3px; padding-left: 3px; white-space: nowrap; }
.tree .root { padding-left: 5px; gap: 2px; }
.twig {
  position: relative;
  width: 17px;
  height: 18px;
  background: linear-gradient(#808080, #808080) 5px 0 / 1px 18px no-repeat, linear-gradient(#808080, #808080) 5px 9px / 11px 1px no-repeat;
}
button.twig::before {
  content: "";
  position: absolute;
  left: 1px;
  top: 5px;
  width: 9px;
  height: 9px;
  border: 1px solid #808080;
  background: linear-gradient(#000, #000) 1px 3px / 5px 1px no-repeat, linear-gradient(#000, #000) 3px 1px / 1px 5px no-repeat, #fff;
}
.twig.last { background-size: 1px 9px, 11px 1px; }

/* 3D view */
.viewport { position: relative; flex: 1; min-width: 0; border-top: 1px solid #716f64; border-right: 2px solid #ece9d8; background: #336394; overflow: hidden; }
.scene { position: absolute; inset: 0; width: 100%; height: 100%; }
.scene .edge { stroke: #c4c4cc; stroke-width: 1; }
.scene .edge:not([fill]) { fill: none; }
.cube { font-family: "Noto Sans CJK SC", sans-serif; fill: #4d6681; text-anchor: middle; }
.cube-edge { fill: none; stroke: #8d8d94; stroke-dasharray: 2 1; }
.axis { font: 10px "Liberation Serif", serif; }
.viewcontrols { position: absolute; top: 5px; right: 3px; display: flex; gap: 6px; }
.navbar {
  position: absolute;
  top: 116px;
  right: 0;
  width: 34px;
  display: flex;
  flex-direction: column;
  align-items: center;
  padding: 2px 0;
  border: 1px solid #5b7ca0;
  background: #7190b3;
  color: #405870;
}
.n-x { align-self: flex-end; width: 12px; height: 8px; }
.n-wheel { height: 34px; }
.n-dd { margin: 2px 0; }
.navbar hr { width: 25px; height: 1px; margin: 3px 0; border: 0; background: #4c6b8e; }
.n-b { height: 24px; }

/* Status bar and input method bar */
.status { position: relative; flex: none; display: flex; align-items: center; height: 21px; padding: 2px 18px 0 1px; background: linear-gradient(#fff, #d9d7cd 50%, #aeaca0); }
.ready { flex: 1; }
.cell { width: 38px; padding-right: 22px; border-right: 1px solid #c1beb0; text-align: right; line-height: 14px; }
.meter { width: 18px; height: 15px; margin-left: 2px; background: linear-gradient(90deg, #00900a 5px, transparent 5px), linear-gradient(#555, #151515); }
.imebar { position: absolute; left: 213px; bottom: 0; display: flex; height: 26px; padding: 3px 2px; border: 1px solid; border-color: #e8e8e8 #000 #000 #e8e8e8; background: #c5c5c5; box-shadow: inset -1px -1px #808080; }
.imebar button { width: 20px; border-right: 1px solid #333; border-bottom: 1px solid #555; }
.imebar .std { width: 39px; font-size: 16px; color: #222; }

/* Taskbar */
.taskbar { flex: none; display: flex; align-items: center; height: 34px; color: #fff; background: linear-gradient(#2c67bf, #3f8df0 4px, #255cda 8px, #245edb 28px, #1a46a8); }
.start { align-self: stretch; justify-content: flex-start; width: 97px; margin-top: 4px; padding: 0 0 3px 10px; gap: 6px; border-radius: 0 10px 12px 0; background: linear-gradient(#6cb86a, #3a943a 6px, #368f36 22px, #246a26); font: italic 18px/26px "Noto Sans CJK SC", sans-serif; text-shadow: 1px 1px 1px #1b4a1c; box-shadow: inset -3px 0 3px #2b752c; }
.dots { width: 4px; height: 20px; margin: 5px 0 0 9px; background: repeating-linear-gradient(#153fa6 0 2px, transparent 2px 5px); }
.quick { display: flex; gap: 7px; padding: 4px 0 0 9px; }
.push { margin-left: 115px; }
.tasks { display: flex; flex: 0 1 318px; gap: 2px; margin: 5px 0 0 8px; min-width: 0; }
.task { flex: 1 1 0; justify-content: flex-start; height: 24px; padding-left: 9px; gap: 4px; border-radius: 3px; background: #3c81f3; box-shadow: inset 0 1px #65a1fa, inset -1px -1px #2a63cd; white-space: nowrap; }
.task.on { background: #1d50b6; box-shadow: inset 1px 1px #143c91; }
.gap { margin-left: auto; margin-right: 9px; }
.lang { display: flex; gap: 6px; align-items: center; width: 159px; padding-top: 4px; }
.ch { width: 16px; height: 16px; background: #316ac5; }
.tray { display: flex; align-items: center; align-self: stretch; gap: 2px; padding: 0 13px 0 0; margin-top: 4px; background: linear-gradient(#19b4f5, #0f9aed 5px, #0d8fe5 24px, #0c6fc0); border-left: 1px solid #0b4ea5; }
.expand { margin-left: -10px; }
.tray time { margin-left: 6px; line-height: 18px; }
```
